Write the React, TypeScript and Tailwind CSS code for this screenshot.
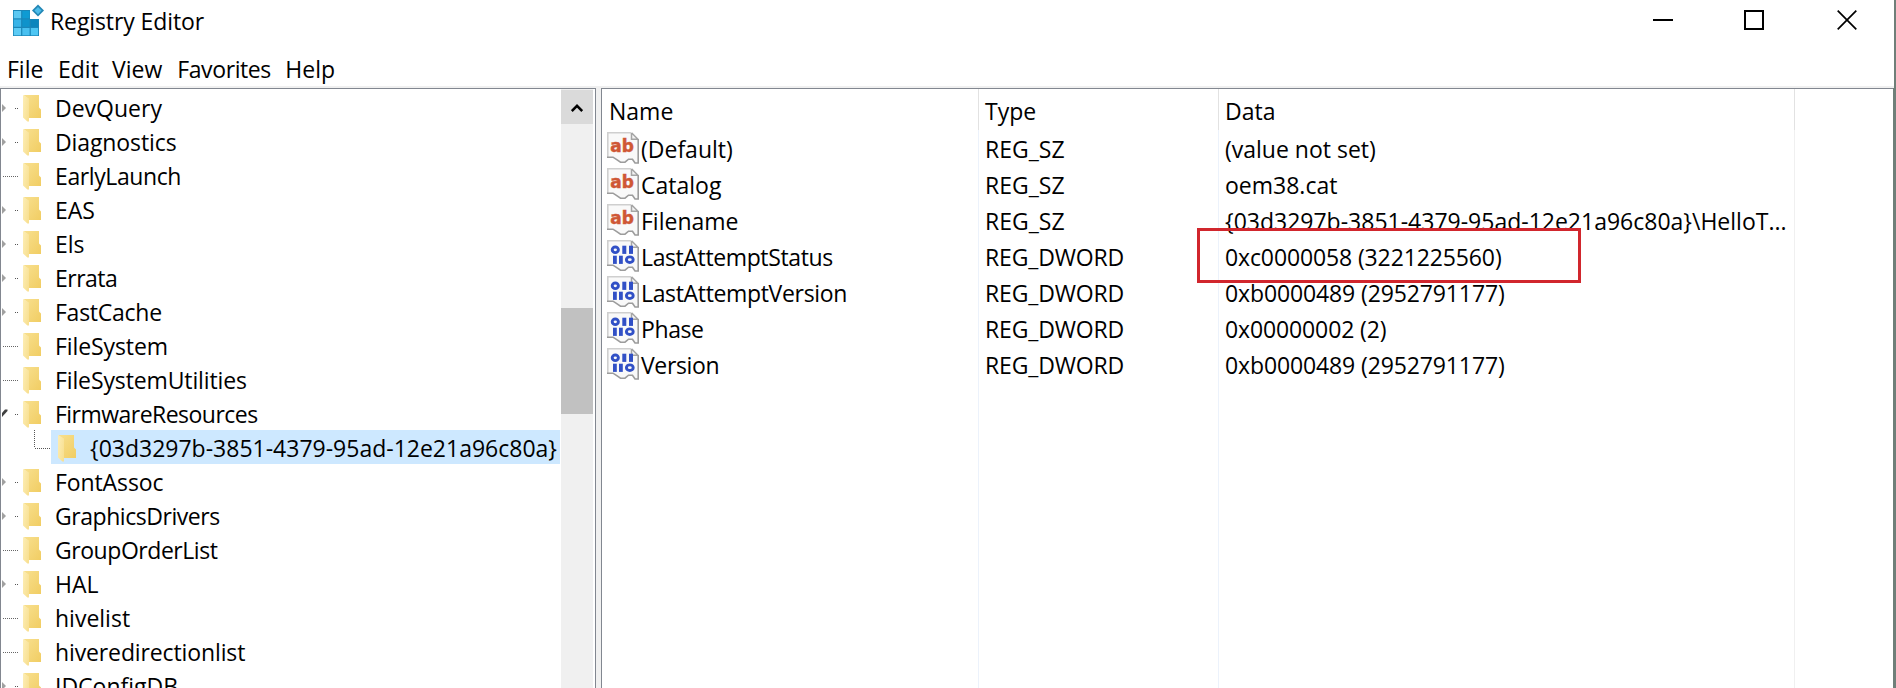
type TreeNode = {
  name: string;
  state: 'closed' | 'open' | 'leaf';
  child?: boolean;
  spacing?: string;
};

type RegValue = {
  name: string;
  kind: 'REG_SZ' | 'REG_DWORD';
  data: string;
  spacing?: string;
};

const tree: TreeNode[] = [
  { name: 'DevQuery', state: 'closed' },
  { name: 'Diagnostics', state: 'closed', spacing: 'tracking-[-0.1px]' },
  { name: 'EarlyLaunch', state: 'leaf', spacing: 'tracking-[-0.4px]' },
  { name: 'EAS', state: 'closed' },
  { name: 'Els', state: 'closed' },
  { name: 'Errata', state: 'closed', spacing: 'tracking-[-0.5px]' },
  { name: 'FastCache', state: 'closed', spacing: 'tracking-[-0.25px]' },
  { name: 'FileSystem', state: 'leaf', spacing: 'tracking-[-0.1px]' },
  { name: 'FileSystemUtilities', state: 'leaf', spacing: 'tracking-[-0.12px]' },
  { name: 'FirmwareResources', state: 'open', spacing: 'tracking-[-0.53px]' },
  { name: '{03d3297b-3851-4379-95ad-12e21a96c80a}', state: 'leaf', child: true },
  { name: 'FontAssoc', state: 'closed', spacing: 'tracking-[-0.1px]' },
  { name: 'GraphicsDrivers', state: 'closed', spacing: 'tracking-[-0.45px]' },
  { name: 'GroupOrderList', state: 'leaf', spacing: 'tracking-[-0.45px]' },
  { name: 'HAL', state: 'closed' },
  { name: 'hivelist', state: 'leaf' },
  { name: 'hiveredirectionlist', state: 'leaf', spacing: 'tracking-[-0.12px]' },
  { name: 'IDConfigDB', state: 'closed' },
];

const values: RegValue[] = [
  { name: '(Default)', kind: 'REG_SZ', data: '(value not set)' },
  { name: 'Catalog', kind: 'REG_SZ', data: 'oem38.cat' },
  { name: 'Filename', kind: 'REG_SZ', data: '{03d3297b-3851-4379-95ad-12e21a96c80a}\\HelloT...' },
  { name: 'LastAttemptStatus', kind: 'REG_DWORD', data: '0xc0000058 (3221225560)', spacing: 'tracking-[-0.38px]' },
  { name: 'LastAttemptVersion', kind: 'REG_DWORD', data: '0xb0000489 (2952791177)', spacing: 'tracking-[-0.34px]' },
  { name: 'Phase', kind: 'REG_DWORD', data: '0x00000002 (2)', spacing: 'tracking-[-0.4px]' },
  { name: 'Version', kind: 'REG_DWORD', data: '0xb0000489 (2952791177)', spacing: 'tracking-[-0.35px]' },
];

function RegistryLogo() {
  const tiles = [
    ['#5cc8f2', '#0e9bd3', ''],
    ['#38b4e8', '#0f93cb', '#0b86bd'],
    ['#5ccbf5', '#49c0f0', '#4ec6f3'],
  ];
  return (
    <svg width="34" height="34" viewBox="0 0 34 34" className="block">
      <path d="M1 6H18V15H27V32H1Z" fill="#1a86b8" />
      {tiles.flatMap((row, r) =>
        row.map((c, i) =>
          c ? <rect key={`${r}-${i}`} x={1.8 + i * 8.5} y={7 + r * 8.5} width="7.3" height="7.3" fill={c} /> : null,
        ),
      )}
      <path d="M26 0.6L32 6.6L26 12.6L20 6.6Z" fill="#2387b5" />
      <path d="M26 3L29.6 6.6L26 10.2L22.4 6.6Z" fill="#4dbdea" />
    </svg>
  );
}

function Folder() {
  return (
    <svg width="18" height="27" viewBox="0 0 18 27" className="block shrink-0">
      <defs>
        <linearGradient id="folderBack" x1="0" y1="0" x2="1" y2="1">
          <stop offset="0" stopColor="#f8e08f" />
          <stop offset="1" stopColor="#f1cd63" />
        </linearGradient>
        <linearGradient id="folderFlap" x1="0" y1="0" x2="1" y2="0.6">
          <stop offset="0" stopColor="#fdeeb6" />
          <stop offset="1" stopColor="#f8e093" />
        </linearGradient>
      </defs>
      <path d="M0.5 0H16V12.5L18 14.5V23H5V4Z" fill="url(#folderBack)" />
      <path d="M0 0L6 3.6V26.5L4.4 26.5L0 22.5Z" fill="url(#folderFlap)" />
    </svg>
  );
}

function Branch({ state }: { state: TreeNode['state'] }) {
  return (
    <svg width="22" height="34" viewBox="0 0 22 34" className="block shrink-0">
      {state === 'leaf' && <path d="M2 18.5H17" stroke="#666" strokeDasharray="1 1" />}
      {state !== 'leaf' && <path d="M14 18.5H17" stroke="#555" strokeDasharray="1 1" />}
      {state === 'closed' && <path d="M1 14L5 18L1 22Z" fill="#a0a0a0" />}
      {state === 'open' && <path d="M1 17L4 13.5H6.5V15L1 21Z" fill="#404040" />}
    </svg>
  );
}

function Row({ node }: { node: TreeNode }) {
  if (node.child) {
    return (
      <div className="flex h-[34px] shrink-0">
        <svg width="50" height="34" viewBox="0 0 50 34" className="block shrink-0">
          <path d="M33.5 0V18" stroke="#555" strokeDasharray="1 1" />
          <path d="M34 18.5H50" stroke="#555" strokeDasharray="1 1" />
        </svg>
        <div className="flex h-[34px] w-[509px] bg-[#cde8ff] pl-[7px]">
          <div className="pt-[5px]">
            <Folder />
          </div>
          <span className="ml-[14px] leading-[36px]">{node.name}</span>
        </div>
      </div>
    );
  }
  return (
    <div className="flex h-[34px] shrink-0">
      <Branch state={node.state} />
      <div className="pt-[5px]">
        <Folder />
      </div>
      <span className={`ml-[14px] leading-[36px] ${node.spacing ?? ''}`}>{node.name}</span>
    </div>
  );
}

function ValueIcon({ kind }: { kind: RegValue['kind'] }) {
  return (
    <svg width="32" height="32" viewBox="0 0 32 32" className="block shrink-0">
      <path d="M1 1H24L31 8V30.5H28L25.5 27H21.5L18 30H13.5L9 27L6 25.5H1Z" fill="#f9f9f9" />
      <path d="M0.8 25V0.8H24" fill="none" stroke="#cfcfcf" strokeWidth="1.6" />
      <path d="M24.5 1V7.2H31M24.5 0.8L31.2 7.5" fill="#f3f3f3" stroke="#a5a5a5" strokeWidth="1.5" />
      <path d="M31.2 7V31H28L25.5 27.2H21.5L18 30.2H13.5L9 27.2L6 25.2H0" fill="none" stroke="#9c9c9c" strokeWidth="1.6" />
      {kind === 'REG_SZ' ? (
        <text
          x="3.2"
          y="20"
          textLength="23.6"
          lengthAdjust="spacingAndGlyphs"
          fill="#cf5735"
          stroke="#cf5735"
          strokeWidth="0.5"
          className="font-['DejaVu_Sans'] text-[18px] font-bold"
        >
          ab
        </text>
      ) : (
        <g fill="#3150c6">
          <ellipse cx="8.3" cy="9.8" rx="3.1" ry="2.8" fill="none" stroke="#3150c6" strokeWidth="2.9" />
          <rect x="15.3" y="5.7" width="4" height="8.2" />
          <rect x="22" y="5.7" width="4" height="8.2" />
          <rect x="6" y="15.7" width="3.8" height="8.2" />
          <rect x="12" y="15.7" width="3.8" height="8.2" />
          <ellipse cx="22.8" cy="19.7" rx="3.4" ry="2.8" fill="none" stroke="#3150c6" strokeWidth="2.9" />
        </g>
      )}
    </svg>
  );
}

function WindowControls() {
  return (
    <div className="flex pt-[10px] pr-[37px]">
      <svg width="20" height="20" viewBox="0 0 20 20" className="mr-[71px] block">
        <path d="M0 10H20" stroke="#000" strokeWidth="2" />
      </svg>
      <svg width="20" height="20" viewBox="0 0 20 20" className="mr-[73px] block">
        <rect x="1" y="1" width="18" height="18" fill="none" stroke="#000" strokeWidth="2" />
      </svg>
      <svg width="20" height="20" viewBox="0 0 20 20" className="block">
        <path d="M0.7 0.7L19.3 19.3M19.3 0.7L0.7 19.3" stroke="#000" strokeWidth="1.7" />
      </svg>
    </div>
  );
}

function Separator({ tone = 'bg-[#ecf2fb]' }: { tone?: string }) {
  return (
    <div className="flex w-px shrink-0 flex-col">
      <div className="h-[41px] bg-[#e2e2e2]" />
      <div className={`flex-1 ${tone}`} />
    </div>
  );
}

export default function App() {
  return (
    <div className="flex h-[688px] w-[1896px] flex-col overflow-hidden bg-white font-['Open_Sans','Noto_Sans',sans-serif] text-[23px] whitespace-nowrap text-black">
      <div className="flex h-[88px] shrink-0 border-r-2 border-[#6f7f79]">
        <div className="flex flex-1 flex-col border-b-2 border-[#f0f0f0]">
          <header className="flex h-[48px] shrink-0 justify-between">
            <div className="flex pl-3">
              <div className="pt-1">
                <RegistryLogo />
              </div>
              <h1 className="ml-[4px] tracking-[-0.1px] leading-[43px]">Registry Editor</h1>
            </div>
            <WindowControls />
          </header>
          <nav className="flex leading-[42px]">
            <span className="w-[51px] pl-[7px]">File</span>
            <span className="ml-[7px] w-[54px]">Edit</span>
            <span>View</span>
            <span className="ml-[15px] w-[108px] tracking-[-0.4px]">Favorites</span>
            <span>Help</span>
          </nav>
        </div>
      </div>

      <main className="flex h-[600px] shrink-0 border-r-[3px] border-[#6f7f79]">
        <section className="flex w-[596px] shrink-0 border-x border-t border-[#828790]">
          <div className="flex w-[560px] shrink-0 flex-col overflow-hidden pt-px">
            {tree.map((n) => (
              <Row key={n.name} node={n} />
            ))}
          </div>
          <div className="flex w-8 flex-col bg-[#f0f0f0] pt-px">
            <div className="grid h-[34px] place-items-center bg-[#dadada] pt-px">
              <svg width="12" height="10" viewBox="0 0 12 10" className="block">
                <path d="M0.8 8L6 2.8L11.2 8" fill="none" stroke="#000" strokeWidth="2.5" />
              </svg>
            </div>
            <div className="mt-[184px] h-[106px] bg-[#c1c1c1]" />
          </div>
        </section>

        <div className="w-[5px] shrink-0 bg-[#f0f0f0]" />

        <section className="relative flex flex-1 border-t border-l border-[#828790]">
          <div className="w-[376px] shrink-0">
            <div className="h-[42px] pl-[7px] leading-[45px]">Name</div>
            {values.map((v) => (
              <div key={v.name} className="flex h-9 pl-[5px] pt-px">
                <ValueIcon kind={v.kind} />
                <span className={`ml-[2px] -mt-px leading-[36px] ${v.spacing ?? ''}`}>{v.name}</span>
              </div>
            ))}
          </div>
          <Separator />
          <div className="w-[239px] shrink-0 pl-[6px]">
            <div className="h-[42px] leading-[45px]">Type</div>
            {values.map((v) => (
              <div key={v.name} className={`h-9 leading-[36px] ${v.kind === 'REG_DWORD' ? 'tracking-[-0.15px]' : ''}`}>
                {v.kind}
              </div>
            ))}
          </div>
          <Separator />
          <div className="w-[575px] shrink-0 pl-[6px]">
            <div className="h-[42px] leading-[45px]">Data</div>
            {values.map((v) => (
              <div key={v.name} className={`h-9 leading-[36px] ${v.kind === 'REG_DWORD' ? 'tracking-[-0.12px]' : ''}`}>
                {v.data}
              </div>
            ))}
          </div>
          <Separator tone="bg-[#f0f0f0]" />
          <div className="absolute top-[139px] left-[595px] h-[55px] w-[384px] border-[3px] border-[#d1262d]" />
        </section>
      </main>
    </div>
  );
}
